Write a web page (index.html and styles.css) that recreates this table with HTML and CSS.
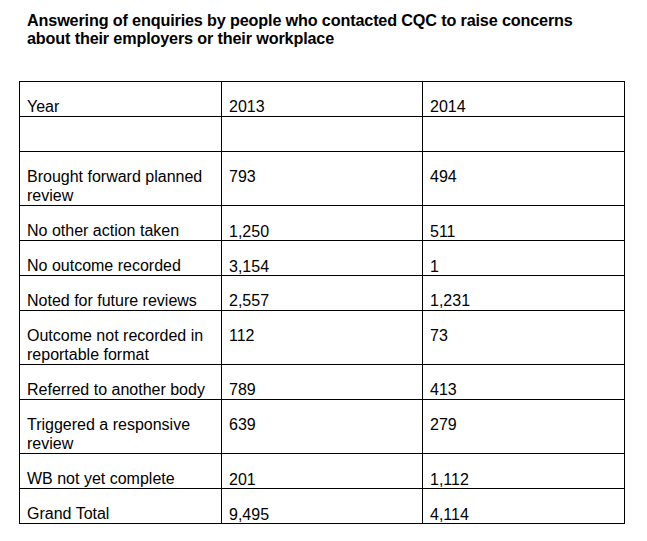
FILE: index.html
```html
<!DOCTYPE html>
<html lang="en">
<head>
<meta charset="utf-8">
<title>Answering of enquiries</title>
<link rel="stylesheet" href="styles.css">
</head>
<body>
<main class="page">
  <h1 class="title">Answering of enquiries by people who contacted CQC to raise concerns about their employers or their workplace</h1>
  <table class="data">
    <colgroup>
      <col class="c1"><col class="c2"><col class="c3">
    </colgroup>
    <tbody>
      <tr><td>Year</td><td>2013</td><td>2014</td></tr>
      <tr><td>&nbsp;</td><td></td><td></td></tr>
      <tr><td>Brought forward planned review</td><td>793</td><td>494</td></tr>
      <tr><td>No other action taken</td><td class="low">1,250</td><td class="low">511</td></tr>
      <tr><td>No outcome recorded</td><td class="low">3,154</td><td class="low">1</td></tr>
      <tr><td>Noted for future reviews</td><td>2,557</td><td>1,231</td></tr>
      <tr><td>Outcome not recorded in reportable format</td><td>112</td><td>73</td></tr>
      <tr><td>Referred to another body</td><td>789</td><td>413</td></tr>
      <tr><td>Triggered a responsive review</td><td>639</td><td>279</td></tr>
      <tr><td>WB not yet complete</td><td class="low">201</td><td class="low">1,112</td></tr>
      <tr><td>Grand Total</td><td class="low">9,495</td><td class="low">4,114</td></tr>
    </tbody>
  </table>
</main>
</body>
</html>
```

FILE: styles.css
```css
html, body {
  margin: 0;
  padding: 0;
  background: #ffffff;
}

.page {
  padding: 11px 0 0 19px;
  font-family: "Liberation Sans", Arial, sans-serif;
  color: #000;
}

.title {
  margin: 0 0 34px 8px;
  width: 575px;
  font-size: 16.2px;
  line-height: 18px;
  font-weight: bold;
  letter-spacing: -0.15px;
}

.data {
  border-collapse: collapse;
  table-layout: fixed;
  width: 605px;
  font-size: 16px;
  line-height: 19px;
}

.c1 { width: 202px; }
.c2 { width: 201px; }
.c3 { width: 202px; }

.data td {
  border: 1px solid #000;
  padding: 15px 4px 0 7px;
  vertical-align: top;
  text-align: left;
}

.data td.low {
  padding-top: 0;
  line-height: 16px;
  vertical-align: bottom;
}
```
